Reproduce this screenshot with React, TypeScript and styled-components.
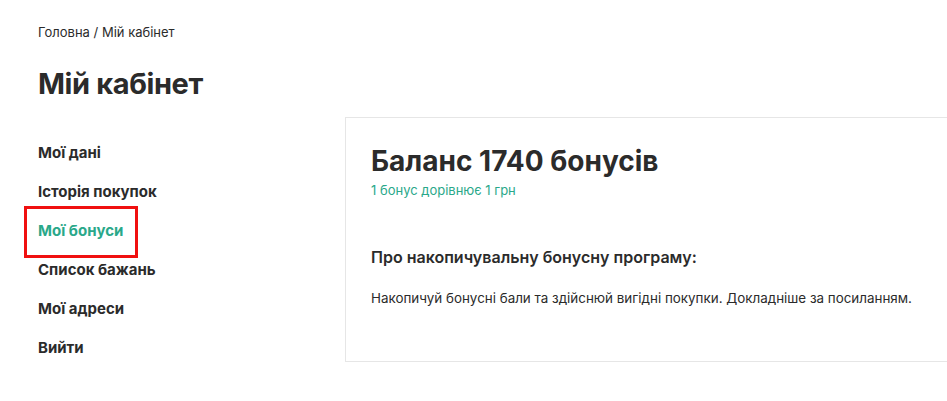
import styled, { createGlobalStyle } from "styled-components";

const GlobalStyle = createGlobalStyle`
    body {
        margin: 0;
        background: #ffffff;
        font-family: "Inter", "Noto Sans", sans-serif;
        color: #2b2b2b;
    }
`;

const Page = styled.div`
    padding: 23px 0 0 38px;
`;

const Breadcrumbs = styled.div`
    font-size: 13px;
    line-height: 18px;
    color: #2b2b2b;
`;

const Title = styled.h1`
    margin: 25px 0 0;
    font-size: 29px;
    line-height: 36px;
    font-weight: 700;
    letter-spacing: -0.4px;
`;

const Layout = styled.div`
    display: flex;
    align-items: flex-start;
    margin-top: 15px;
`;

const Sidebar = styled.ul`
    list-style: none;
    margin: 0;
    padding: 26px 0 0;
    width: 307px;
    flex-shrink: 0;
`;

const MenuItem = styled.li<{ $active?: boolean }>`
    position: relative;
    font-size: 15px;
    line-height: 20px;
    font-weight: 700;
    margin-bottom: 19px;
    color: ${(p) => (p.$active ? "#2aa88a" : "#2b2b2b")};
`;

const Highlight = styled.span`
    position: absolute;
    left: -14px;
    top: -15px;
    width: 108px;
    height: 46px;
    border: 3px solid #f01010;
`;

const Panel = styled.section`
    flex: 1;
    border: 1px solid #e6e6e6;
    border-right: none;
    padding: 26px 25px 54px;
`;

const Balance = styled.h2`
    margin: 0;
    font-size: 28px;
    line-height: 34px;
    font-weight: 700;
`;

const Rate = styled.div`
    margin-top: 3px;
    font-size: 13px;
    line-height: 18px;
    color: #2aa88a;
`;

const Subtitle = styled.h3`
    margin: 47px 0 0;
    font-size: 16px;
    line-height: 22px;
    font-weight: 600;
`;

const Text = styled.p`
    margin: 21px 0 0;
    font-size: 13.4px;
    line-height: 18px;
`;

const items = ["Мої дані", "Історія покупок", "Мої бонуси", "Список бажань", "Мої адреси", "Вийти"];

export default function App() {
    return (
        <>
            <GlobalStyle />
            <Page>
                <Breadcrumbs>Головна / Мій кабінет</Breadcrumbs>
                <Title>Мій кабінет</Title>
                <Layout>
                    <Sidebar>
                        {items.map((item) => (
                            <MenuItem key={item} $active={item === "Мої бонуси"}>
                                {item === "Мої бонуси" && <Highlight />}
                                {item}
                            </MenuItem>
                        ))}
                    </Sidebar>
                    <Panel>
                        <Balance>Баланс 1740 бонусів</Balance>
                        <Rate>1 бонус дорівнює 1 грн</Rate>
                        <Subtitle>Про накопичувальну бонусну програму:</Subtitle>
                        <Text>Накопичуй бонусні бали та здійснюй вигідні покупки. Докладніше за посиланням.</Text>
                    </Panel>
                </Layout>
            </Page>
        </>
    );
}
